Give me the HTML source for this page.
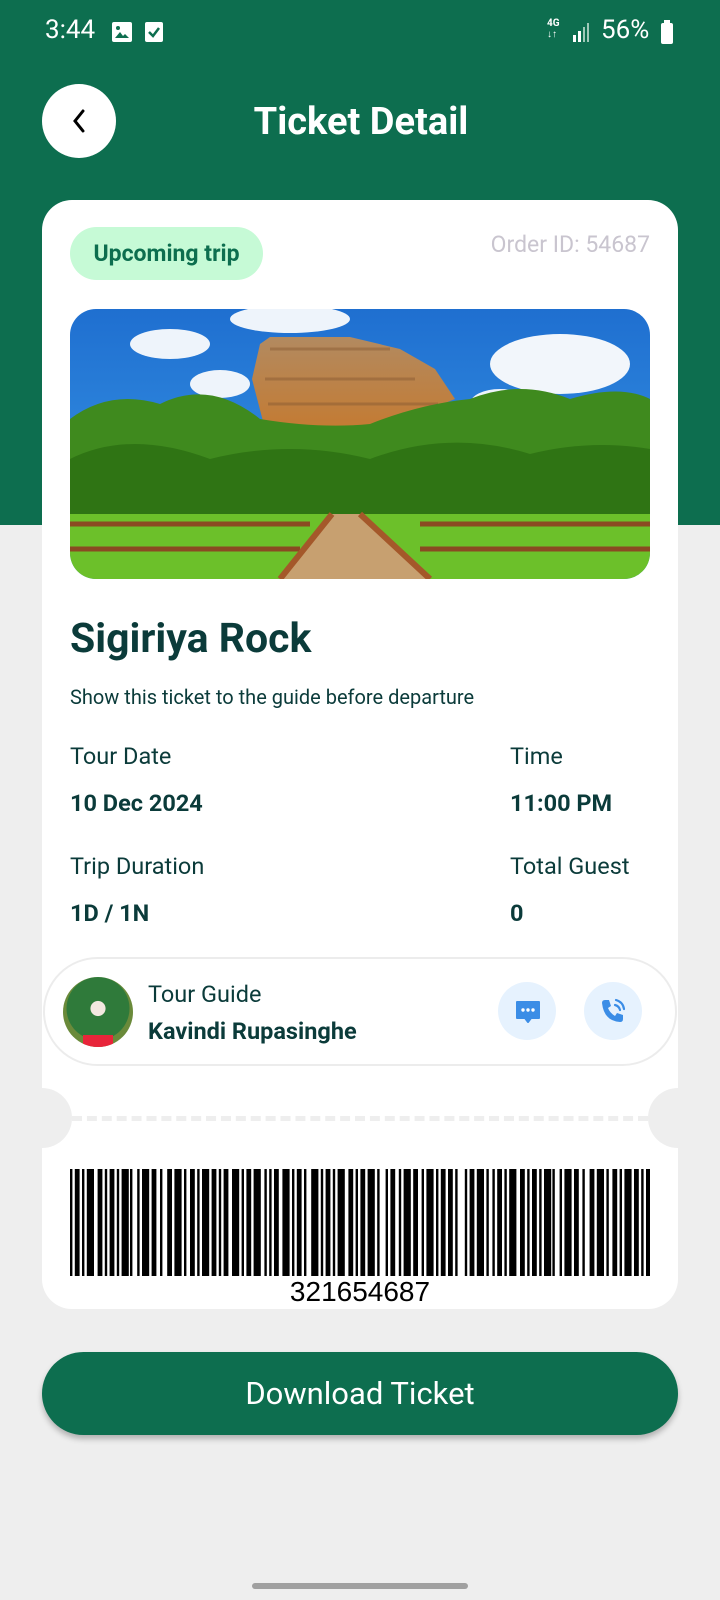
<!DOCTYPE html><html><head><meta charset="utf-8"><style>
*{margin:0;padding:0;box-sizing:border-box}
body{width:720px;height:1600px;background:#eeeeee;font-family:"Roboto","Liberation Sans",sans-serif;position:relative;overflow:hidden;color:#0b3b3a}
.hdr{position:absolute;left:0;top:0;width:720px;height:525px;background:#0d6e4f}
.abs{position:absolute}
.sb{color:#fff;font-size:26px;top:15px}
.card{left:42px;top:200px;width:636px;height:1109px;background:#fff;border-radius:30px;overflow:hidden}
.lbl{font-size:23.5px;color:#0b3b3a}
.val{font-size:23.5px;font-weight:bold;color:#0b3b3a}
</style></head><body>
<div class="hdr"></div>
<div class="abs sb" style="left:45px">3:44</div>
<svg class="abs" style="left:111px;top:21px" width="22" height="22" viewBox="0 0 22 22"><rect x="1" y="1" width="20" height="20" rx="2" fill="#fff"/><path d="M4 17l5-6 3 4 2-2 4 4z" fill="#0d6e4f"/><circle cx="7" cy="7" r="2" fill="#0d6e4f"/></svg>
<svg class="abs" style="left:144px;top:21px" width="20" height="22" viewBox="0 0 20 22"><rect x="1" y="1" width="18" height="20" rx="2" fill="#fff"/><path d="M5 11l4 4 6-8" stroke="#0d6e4f" stroke-width="2.5" fill="none"/></svg>
<div class="abs" style="left:547px;top:18px;color:#fff;font-size:10px;line-height:11px;font-weight:bold">4G<br>↓↑</div>
<svg class="abs" style="left:572px;top:21px" width="20" height="22"><rect x="1" y="14" width="3" height="7" fill="#fff"/><rect x="6" y="10" width="3" height="11" fill="#fff"/><rect x="11" y="6" width="2" height="15" fill="#9fc9b8"/><rect x="15" y="2" width="2" height="19" fill="#9fc9b8"/></svg>
<div class="abs sb" style="left:601px">56%</div>
<svg class="abs" style="left:661px;top:20px" width="12" height="24"><rect x="3" y="0" width="6" height="3" fill="#fff"/><rect x="0" y="3" width="12" height="21" rx="2" fill="#fff"/></svg>

<div class="abs" style="left:42px;top:84px;width:74px;height:74px;border-radius:50%;background:#fff"></div>
<svg class="abs" style="left:68px;top:108px" width="22" height="26"><path d="M15 3L7 13l8 10" stroke="#000" stroke-width="3" fill="none" stroke-linecap="round"/></svg>
<div class="abs" style="left:0;width:720px;top:100px;text-align:center;color:#fff;font-size:38px;font-weight:bold;padding-left:2px">Ticket Detail</div>

<div class="abs card">
 <div class="abs" style="left:28px;top:27px;width:193px;height:53px;border-radius:27px;background:#c6fad6;color:#0d6e4f;font-weight:bold;font-size:23px;line-height:53px;text-align:center">Upcoming trip</div>
 <div class="abs" style="right:28px;top:31px;color:#c9c5cf;font-size:23px">Order ID: 54687</div>
 <svg class="abs" style="left:28px;top:109px;border-radius:26px" width="580" height="270" viewBox="0 0 580 270">
  <defs><linearGradient id="sk" x1="0" y1="0" x2="0" y2="1"><stop offset="0" stop-color="#1f6fd0"/><stop offset="1" stop-color="#3b9be8"/></linearGradient>
  <linearGradient id="rk" x1="0" y1="0" x2="0" y2="1"><stop offset="0" stop-color="#b28a60"/><stop offset="1" stop-color="#c57a30"/></linearGradient></defs>
  <rect width="580" height="270" fill="url(#sk)"/>
  <ellipse cx="100" cy="35" rx="40" ry="15" fill="#eef4fb"/><ellipse cx="150" cy="75" rx="30" ry="14" fill="#eef4fb"/>
  <ellipse cx="220" cy="10" rx="60" ry="14" fill="#eef4fb"/><ellipse cx="490" cy="55" rx="70" ry="30" fill="#f2f6fb"/><ellipse cx="430" cy="95" rx="30" ry="15" fill="#eef4fb"/>
  <path d="M182 70L190 35 200 28 280 28 330 40 365 60 385 90 300 125 195 120z" fill="url(#rk)"/>
  <path d="M200 40h120M195 70h150M198 95h170" stroke="#8a5c34" stroke-width="3" opacity=".5"/>
  <path d="M0 110Q40 80 90 95Q140 70 190 110Q250 120 300 115Q350 95 400 90Q450 70 500 90Q550 75 580 90V225H0z" fill="#3f8a1e"/>
  <path d="M0 150Q60 120 140 150Q220 130 300 150Q380 120 460 145Q520 130 580 140V225H0z" fill="#2f7414"/>
  <rect y="205" width="580" height="65" fill="#6cc02a"/>
  <path d="M0 215h240M0 240h230M350 215h230M350 240h230" stroke="#8a4a22" stroke-width="5"/>
  <path d="M262 205h28l70 65H210z" fill="#c7a070"/>
  <path d="M262 205L210 270M290 205l70 65" stroke="#a4582a" stroke-width="6"/>
 </svg>
 <div class="abs" style="left:28px;top:415px;font-size:41px;font-weight:bold">Sigiriya Rock</div>
 <div class="abs" style="left:28px;top:485px;font-size:20px">Show this ticket to the guide before departure</div>
 <div class="abs lbl" style="left:28px;top:542px">Tour Date</div>
 <div class="abs val" style="left:28px;top:589px">10 Dec 2024</div>
 <div class="abs lbl" style="left:468px;top:542px">Time</div>
 <div class="abs val" style="left:468px;top:589px">11:00 PM</div>
 <div class="abs lbl" style="left:28px;top:652px">Trip Duration</div>
 <div class="abs val" style="left:28px;top:699px">1D / 1N</div>
 <div class="abs lbl" style="left:468px;top:652px">Total Guest</div>
 <div class="abs val" style="left:468px;top:699px">0</div>
 <div class="abs" style="left:1px;top:757px;width:634px;height:109px;border:2px solid #ececec;border-radius:55px"></div>
 <div class="abs" style="left:21px;top:777px;width:70px;height:70px;border-radius:50%;background:radial-gradient(circle at 50% 45%,#f3e8e0 0 14%,#2f7a3a 15% 60%,#6a8a3a 61%);overflow:hidden"><div style="position:absolute;left:20px;top:58px;width:30px;height:12px;background:#e8253a"></div></div>
 <div class="abs" style="left:106px;top:780px;font-size:23.5px">Tour Guide</div>
 <div class="abs" style="left:106px;top:817px;font-size:23.5px;font-weight:bold">Kavindi Rupasinghe</div>
 <div class="abs" style="left:456px;top:782px;width:58px;height:58px;border-radius:50%;background:#e6f2fe"></div>
 <svg class="abs" style="left:471px;top:797px" width="30" height="30" viewBox="0 0 30 30"><path d="M4 5h22v16H18l-3 4-3-4H4z" fill="#3b8de6" stroke="#3b8de6" stroke-width="2" stroke-linejoin="round"/><circle cx="10" cy="13" r="1.7" fill="#fff"/><circle cx="15" cy="13" r="1.7" fill="#fff"/><circle cx="20" cy="13" r="1.7" fill="#fff"/></svg>
 <div class="abs" style="left:542px;top:782px;width:58px;height:58px;border-radius:50%;background:#e6f2fe"></div>
 <svg class="abs" style="left:556px;top:796px" width="30" height="30" viewBox="0 0 30 30"><path d="M7 4l4 0 2 6-3 2q2 5 7 8l2-3 6 2v4q0 3-3 3Q6 25 4 7q0-3 3-3z" fill="#3b8de6"/><path d="M17 9q4 1 5 5M18 4q7 2 8 9" stroke="#3b8de6" stroke-width="2.2" fill="none" stroke-linecap="round"/></svg>
 <div class="abs" style="left:30px;top:916px;width:576px;border-top:5px dashed #eeeeee"></div>
 <div class="abs" style="left:-30px;top:888px;width:60px;height:60px;border-radius:50%;background:#eeeeee"></div>
 <div class="abs" style="left:606px;top:888px;width:60px;height:60px;border-radius:50%;background:#eeeeee"></div>
 <svg class="abs" style="left:28px;top:969px" width="580" height="107" viewBox="0 0 580 107" id="bc"></svg>
 <div class="abs" style="left:0;width:636px;top:1076px;text-align:center;font-size:28px;color:#000;font-family:'Liberation Sans',sans-serif">321654687</div>
</div>
<div class="abs" style="left:42px;top:1352px;width:636px;height:83px;border-radius:42px;background:#0d6e4f;box-shadow:0 4px 6px rgba(0,0,0,.25);color:#fff;font-size:31px;text-align:center;line-height:83px">Download Ticket</div>
<div class="abs" style="left:252px;top:1583px;width:216px;height:6px;border-radius:3px;background:#a0a0a0"></div>
<script>
var w=[2,2,4,2,2,2,6,3,4,2,2,2,4,2,2,2,6,1,2,4,2,2,6,2,4,3,2,4,4,2,6,2,2,3,4,2,2,2,6,2,4,2,2,2,4,3,6,2,2,2,4,2,6,3,2,2,2,2,4,3,6,2,2,2,4,2,2,4,6,2,2,2,4,2,2,2,6,3,4,2,2,2,4,2,6,2,2,5,2,2,4,3,2,2,6,2,4,3,2,2,6,2,2,2,4,2,4,2,2,6,2,2,4,2,6,2,2,3];
var s='',x=0,b=true,i=0;while(x<580){var ww=w[i%w.length]*1.2;if(b)s+='<rect x="'+x.toFixed(1)+'" y="0" width="'+ww.toFixed(1)+'" height="107"/>';x+=ww;b=!b;i++;}
document.getElementById('bc').innerHTML=s;
</script>
</body></html>
